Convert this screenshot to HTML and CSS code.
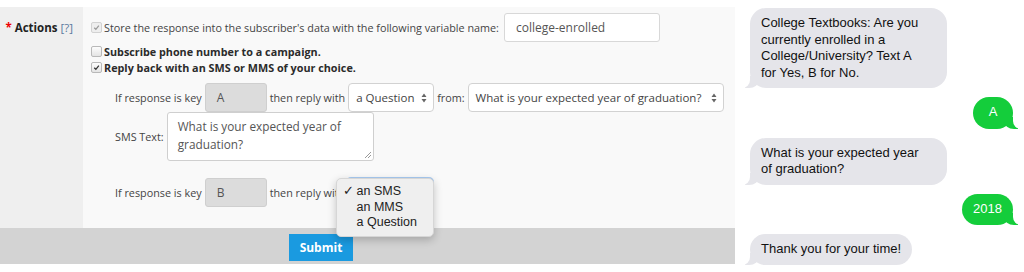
FILE: index.html
```html
<!DOCTYPE html>
<html>
<head>
<meta charset="utf-8">
<link rel="stylesheet" href="styles.css">
</head>
<body>
<div class="page">
  <div class="form-panel">
    <div class="form-row">
      <div class="label-col">
        <span class="req">*</span> <span class="label-text">Actions</span> <span class="help">[?]</span>
      </div>
      <div class="content-col">
        <div class="line line-first">
          <span class="cb cb-disabled"><svg viewBox="0 0 10 10" width="10" height="10"><path d="M2.5 5.2 L4.3 7 L7.6 3" fill="none" stroke="#9a9a9a" stroke-width="1.4"/></svg></span>
          <span class="plain">Store the response into the subscriber's data with the following variable name:</span>
          <div class="input var-input">college-enrolled</div>
        </div>
        <div class="line">
          <span class="cb"></span>
          <span class="strong">Subscribe phone number to a campaign.</span>
        </div>
        <div class="line">
          <span class="cb"><svg viewBox="0 0 10 10" width="10" height="10"><path d="M2.5 5.2 L4.3 7 L7.6 3" fill="none" stroke="#333" stroke-width="1.4"/></svg></span>
          <span class="strong">Reply back with an SMS or MMS of your choice.</span>
        </div>
        <div class="sub">
          <div class="sub-row">
            <span class="plain">If response is key</span>
            <div class="input key-input">A</div>
            <span class="plain">then reply with</span>
            <div class="select sel-type">
              <span>a Question</span>
              <svg class="arrows" viewBox="0 0 6 10" width="6" height="10"><path d="M3 0.5 L5.5 4 H0.5 Z M3 9.5 L5.5 6 H0.5 Z" fill="#666"/></svg>
            </div>
            <span class="plain">from:</span>
            <div class="select sel-question">
              <span>What is your expected year of graduation?</span>
              <svg class="arrows" viewBox="0 0 6 10" width="6" height="10"><path d="M3 0.5 L5.5 4 H0.5 Z M3 9.5 L5.5 6 H0.5 Z" fill="#666"/></svg>
            </div>
          </div>
          <div class="sub-row">
            <span class="plain">SMS Text:</span>
            <div class="textarea">What is your expected year of graduation?
              <svg class="grip" viewBox="0 0 8 8" width="8" height="8"><path d="M7 1 L1 7 M7 4 L4 7" stroke="#999" stroke-width="1"/></svg>
            </div>
          </div>
          <div class="sub-row sub-row-b">
            <span class="plain">If response is key</span>
            <div class="input key-input">B</div>
            <span class="plain">then reply wit</span>
            <div class="select-wrap">
              <div class="select sel-type sel-focus">
                <span>an SMS</span>
              </div>
              <div class="popup">
                <div class="opt"><span class="tick">✓</span>an SMS</div>
                <div class="opt">an MMS</div>
                <div class="opt">a Question</div>
              </div>
            </div>
          </div>
        </div>
      </div>
    </div>
    <div class="footer">
      <button class="submit">Submit</button>
    </div>
  </div>
  <div class="chat">
    <div class="bubble in wide">College Textbooks: Are you<br>currently enrolled in a<br>College/University? Text A<br>for Yes, B for No.</div>
    <div class="bubble out">A</div>
    <div class="bubble in wide">What is your expected year<br>of graduation?</div>
    <div class="bubble out">2018</div>
    <div class="bubble in">Thank you for your time!</div>
  </div>
</div>
</body>
</html>
```
FILE: styles.css
```css
html, body {
  margin: 0;
  padding: 0;
  background: #fff;
}
.page {
  display: flex;
  width: 1024px;
  height: 272px;
  overflow: hidden;
}
.form-panel {
  width: 735px;
  padding-top: 7px;
  font-family: "Open Sans", sans-serif;
  font-size: 10.8px;
  color: #333;
}
.form-row {
  display: flex;
  height: 221px;
}
.label-col {
  width: 73px;
  padding: 14px 10px 0 0;
  background: #efefef;
  text-align: right;
  font-size: 11.5px;
  line-height: 14px;
  white-space: nowrap;
  flex: none;
}
.req {
  color: #e00;
  font-weight: 700;
}
.label-text {
  font-weight: 700;
  color: #222;
}
.help {
  color: #5c7a9e;
}
.content-col {
  flex: 1;
  background: #f9f9f9;
  padding: 6px 0 0 8px;
}
.line {
  display: flex;
  align-items: center;
  height: 16px;
}
.line-first {
  height: 29px;
  margin-bottom: 1px;
}
.cb {
  width: 9px;
  height: 9px;
  border: 1px solid #b9b9b9;
  border-radius: 2px;
  background: linear-gradient(#fdfdfd, #e4e4e4);
  margin-right: 2px;
  display: flex;
  align-items: center;
  justify-content: center;
  flex: none;
}
.cb svg {
  width: 9px;
  height: 9px;
}
.cb-disabled {
  border-color: #d2d2d2;
  background: #eee;
}
.plain {
  color: #444;
  white-space: nowrap;
}
.strong {
  font-weight: 700;
  color: #2b2b2b;
  white-space: nowrap;
}
.input {
  box-sizing: border-box;
  height: 29px;
  border: 1px solid #d8d8d8;
  border-radius: 3px;
  background: #fff;
  display: flex;
  align-items: center;
  font-size: 12px;
  color: #555;
}
.var-input {
  width: 156px;
  margin-left: 5px;
  padding-left: 11px;
}
.sub {
  margin-top: 8px;
  padding-left: 24px;
}
.sub-row {
  display: flex;
  align-items: center;
  gap: 3px;
}
.sub-row-b {
  margin-top: 17px;
}
.key-input {
  width: 62px;
  background: #dcdcdc;
  border-color: #cfcfcf;
  padding-left: 11px;
}
.select {
  box-sizing: border-box;
  height: 29px;
  border: 1px solid #d2d2d2;
  border-radius: 4px;
  background: #fff;
  display: flex;
  align-items: center;
  justify-content: space-between;
  padding: 0 6px 0 7px;
  font-size: 11.5px;
  color: #444;
  white-space: nowrap;
}
.sel-type {
  width: 86px;
}
.sel-question {
  width: 256px;
}
.arrows {
  flex: none;
}
.textarea {
  position: relative;
  box-sizing: border-box;
  width: 207px;
  height: 49px;
  border: 1px solid #cfcfcf;
  border-radius: 3px;
  background: #fff;
  padding: 4px 10px;
  font-size: 11.8px;
  line-height: 18px;
  color: #555;
}
.grip {
  position: absolute;
  right: 1px;
  bottom: 1px;
}
.select-wrap {
  position: relative;
  margin-left: 5px;
}
.sel-focus {
  border-color: #7fb0ea;
  box-shadow: 0 0 0 1px #a9cbf2;
}
.popup {
  position: absolute;
  left: -11px;
  top: 0;
  width: 98px;
  box-sizing: border-box;
  padding: 5px 0 5px;
  background: #efefef;
  border: 1px solid #d6d6d6;
  border-radius: 5px;
  box-shadow: 0 3px 8px rgba(0,0,0,0.22);
  font-family: "Liberation Sans", Arial, sans-serif;
  font-size: 12.5px;
  color: #222;
}
.opt {
  position: relative;
  height: 15.5px;
  line-height: 15.5px;
  padding-left: 20px;
}
.tick {
  position: absolute;
  left: 6px;
}
.footer {
  height: 36px;
  background: #d3d3d3;
  padding-left: 289px;
  padding-top: 6px;
  box-sizing: border-box;
}
.submit {
  width: 64px;
  height: 27px;
  border: 0;
  background: #1a9ae0;
  color: #fff;
  font-family: "Open Sans", sans-serif;
  font-weight: 700;
  font-size: 12px;
  padding: 0;
}
.chat {
  flex: 1;
  display: flex;
  flex-direction: column;
  gap: 9px;
  padding: 8px 11px 0 15px;
  font-family: "Liberation Sans", Arial, sans-serif;
  font-size: 13px;
  line-height: 16.5px;
}
.bubble {
  position: relative;
  padding: 7px 11px;
  border-radius: 16px;
  color: #111;
  width: fit-content;
}
.bubble.in {
  background: #e5e5ea;
  align-self: flex-start;
}
.bubble.in.wide {
  width: 175px;
}
.bubble.out {
  background: #14cd3b;
  color: #fff;
  align-self: flex-end;
  padding: 7px 11px 8px;
  min-width: 18px;
  text-align: center;
}
.bubble.in::before {
  content: "";
  position: absolute;
  left: -5px;
  bottom: 0;
  width: 14px;
  height: 12px;
  background: #e5e5ea;
  border-bottom-right-radius: 10px 8px;
}
.bubble.in::after {
  content: "";
  position: absolute;
  left: -10px;
  bottom: 0;
  width: 10px;
  height: 14px;
  background: #fff;
  border-bottom-right-radius: 8px;
}
.bubble.out::before {
  content: "";
  position: absolute;
  right: -5px;
  bottom: 0;
  width: 14px;
  height: 12px;
  background: #14cd3b;
  border-bottom-left-radius: 10px 8px;
}
.bubble.out::after {
  content: "";
  position: absolute;
  right: -10px;
  bottom: 0;
  width: 10px;
  height: 14px;
  background: #fff;
  border-bottom-left-radius: 8px;
}
```
